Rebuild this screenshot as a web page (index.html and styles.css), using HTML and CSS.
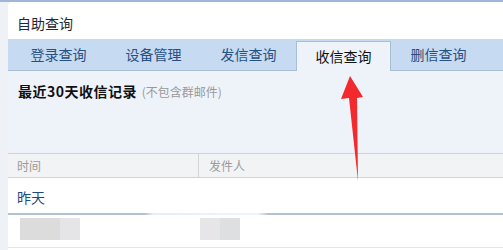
FILE: index.html
```html
<!DOCTYPE html>
<html lang="zh-CN">
<head>
<meta charset="utf-8">
<title>自助查询</title>
<link rel="stylesheet" href="styles.css">
</head>
<body>
<div class="topbar"></div>
<div class="panel">
  <div class="title">自助查询</div>
  <div class="tabs">
    <div class="tab">登录查询</div>
    <div class="tab">设备管理</div>
    <div class="tab">发信查询</div>
    <div class="tab active">收信查询</div>
    <div class="tab">删信查询</div>
  </div>
  <div class="summary">
    <span class="summary-main">最近30天收信记录</span>
    <span class="summary-note">(不包含群邮件)</span>
  </div>
  <div class="thead">
    <div class="col col-time">时间</div>
    <div class="col col-from">发件人</div>
  </div>
  <div class="day">昨天</div>
  <div class="day-line"></div>
  <div class="row">
    <div class="blur blur-a"></div>
    <div class="blur blur-b"></div>
  </div>
</div>
<svg class="arrow" width="503" height="250" viewBox="0 0 503 250">
  <polygon points="350,76 341,99 349,98 358,181 357,98 363,97" fill="#f22a2e"/>
</svg>
</body>
</html>
```
FILE: styles.css
```css
html, body {
  margin: 0;
  padding: 0;
}
body {
  width: 503px;
  height: 250px;
  overflow: hidden;
  background: #eef1f5;
  font-family: "Noto Sans CJK SC", "Noto Sans", sans-serif;
  position: relative;
}
.topbar {
  height: 2px;
  background: #9fb6d6;
}
.panel {
  margin-left: 8px;
  background: #fff;
  border-top-left-radius: 4px;
  height: 248px;
}
.title {
  height: 37px;
  line-height: 43px;
  padding-left: 9px;
  font-size: 14px;
  color: #1e2833;
}
.tabs {
  height: 31px;
  background: #c6daf1;
  border-bottom: 1px solid #a9bdd6;
  display: flex;
  align-items: flex-end;
  padding-left: 3px;
}
.tab {
  width: 95px;
  height: 29px;
  line-height: 27px;
  text-align: center;
  font-size: 14px;
  color: #264f82;
  box-sizing: border-box;
}
.tab.active {
  background: #eef3fa;
  border: 1px solid #a9bdd8;
  border-bottom: none;
  margin-bottom: -1px;
  height: 30px;
  color: #111;
  line-height: 28px;
}
.summary {
  height: 82px;
  background: #eef3fa;
  padding-left: 10px;
  padding-top: 9px;
  box-sizing: border-box;
  line-height: 20px;
}
.summary-main {
  font-size: 14px;
  font-weight: bold;
  color: #111;
  letter-spacing: 0.5px;
}
.summary-note {
  font-size: 12px;
  color: #999;
  margin-left: 1px;
}
.thead {
  display: flex;
  height: 23px;
  background: #f2f3f5;
  border-top: 1px solid #cfd2d6;
  border-bottom: 1px solid #cfd2d6;
}
.col {
  font-size: 12px;
  color: #9a9a9a;
  line-height: 23px;
}
.col-time {
  width: 181px;
  padding-left: 9px;
  border-right: 1px solid #d3d5d8;
}
.col-from {
  padding-left: 10px;
}
.day {
  height: 35px;
  line-height: 38px;
  padding-left: 9px;
  font-size: 14px;
  color: #1d4a80;
}
.day-line {
  height: 2px;
  background: linear-gradient(to right, #b2c2d2 0, #b2c2d2 137px, #e6eef6 145px, #eef4fa 250px, #b2c2d2 260px, #b2c2d2 100%);
}
.row {
  height: 33px;
  border-bottom: 1px solid #e6e6e6;
  display: flex;
  align-items: flex-start;
  padding-top: 3px;
  box-sizing: border-box;
}
.blur {
  height: 22px;
}
.blur-a {
  width: 60px;
  margin-left: 12px;
  background: linear-gradient(to right, #dcdcdd 0, #dcdcdd 40px, #e5e5e7 40px);
}
.blur-b {
  width: 40px;
  margin-left: 120px;
  background: linear-gradient(to right, #e6e6e8 0, #e6e6e8 20px, #dedfe1 20px);
}
.arrow {
  position: absolute;
  left: 0;
  top: 0;
  pointer-events: none;
}
```
